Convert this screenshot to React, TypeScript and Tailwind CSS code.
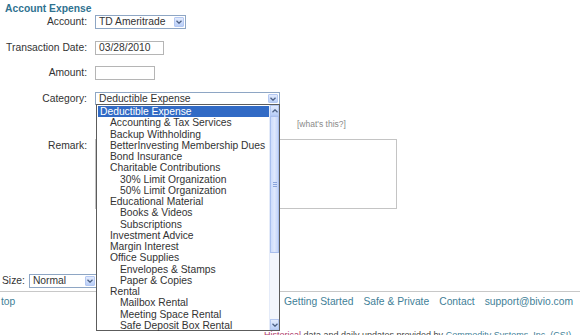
import React from 'react';

const categories: [number, string][] = [
  [0, 'Deductible Expense'],
  [1, 'Accounting & Tax Services'],
  [1, 'Backup Withholding'],
  [1, 'BetterInvesting Membership Dues'],
  [1, 'Bond Insurance'],
  [1, 'Charitable Contributions'],
  [2, '30% Limit Organization'],
  [2, '50% Limit Organization'],
  [1, 'Educational Material'],
  [2, 'Books & Videos'],
  [2, 'Subscriptions'],
  [1, 'Investment Advice'],
  [1, 'Margin Interest'],
  [1, 'Office Supplies'],
  [2, 'Envelopes & Stamps'],
  [2, 'Paper & Copies'],
  [1, 'Rental'],
  [2, 'Mailbox Rental'],
  [2, 'Meeting Space Rental'],
  [2, 'Safe Deposit Box Rental'],
];

const indent = ['pl-[2px]', 'pl-[12px]', 'pl-[22px]'];

function Chevron({ up = false }: { up?: boolean }) {
  return (
    <svg width="6" height="4" viewBox="0 0 6 4" className={up ? 'rotate-180' : ''}>
      <path d="M0.5 0.8 L3 3.2 L5.5 0.8" fill="none" stroke="#4d6185" strokeWidth="1.3" />
    </svg>
  );
}

function ArrowButton() {
  return (
    <div className="w-[10px] h-full flex items-center justify-center border border-[#b4c8f2] bg-gradient-to-b from-[#e3ebfd] to-[#b9cef7] rounded-[1px]">
      <Chevron />
    </div>
  );
}

function Label({ children }: { children: React.ReactNode }) {
  return <div className="w-[87px] text-right shrink-0">{children}</div>;
}

export default function App() {
  return (
    <div className="relative w-[580px] h-[335px] overflow-hidden bg-white text-[#333] text-[10.3px] leading-[12px] font-['Liberation_Sans',Arial,sans-serif]">
      <div className="pl-[5px] pt-[3px] font-bold text-[#2f7290]">Account Expense</div>

      {/* Form rows */}
      <div className="flex items-center gap-[8px] h-[14px]">
        <Label>Account:</Label>
        <div className="w-[91px] h-[14px] border border-[#8ea6c4] flex items-center pl-[3px] pr-[1px] py-[1px] gap-[2px]">
          <span className="flex-1">TD Ameritrade</span>
          <ArrowButton />
        </div>
      </div>

      <div className="flex items-center gap-[8px] h-[14px] mt-[12px]">
        <Label>Transaction Date:</Label>
        <div className="w-[69px] h-[14px] border border-[#b5b5b5] flex items-center pl-[3px]">03/28/2010</div>
      </div>

      <div className="flex items-center gap-[8px] h-[14px] mt-[11px]">
        <Label>Amount:</Label>
        <div className="w-[60px] h-[14px] border border-[#b5b5b5]" />
      </div>

      <div className="flex items-center gap-[8px] h-[13px] mt-[12px]">
        <Label>Category:</Label>
        <div className="w-[185px] h-[13px] border border-[#8ea6c4] flex items-center pl-[3px] pr-[1px] py-[1px]">
          <span className="flex-1">Deductible Expense</span>
          <ArrowButton />
        </div>
      </div>

      <div className="pl-[297px] mt-[13px] text-[8.5px] text-[#8a8a8a] h-[12px]">[what's this?]</div>

      <div className="flex items-start gap-[8px] mt-[9px]">
        <div className="w-[87px] text-right shrink-0 pt-[1px]">Remark:</div>
        <div className="w-[302px] h-[70px] border border-[#c4c4c4]" />
      </div>

      <div className="flex items-center gap-[4px] h-[14px] mt-[65px] pl-[2px]">
        <span>Size:</span>
        <div className="w-[68px] h-[14px] border border-[#8ea6c4] flex items-center pl-[3px] pr-[1px] py-[1px]">
          <span className="flex-1">Normal</span>
          <ArrowButton />
        </div>
      </div>

      <div className="mt-[3px] border-t border-[#c8c8c8]" />
      <div className="flex items-center h-[12px] mt-[4px] text-[#3f7f98]">
        <span className="pl-[1px]">top</span>
        <div className="ml-auto flex gap-[10px] pr-[7px]">
          <span>Getting Started</span>
          <span>Safe &amp; Private</span>
          <span>Contact</span>
          <span>support@bivio.com</span>
        </div>
      </div>

      <div className="pl-[264px] mt-[21px] text-[9px] text-[#444] whitespace-nowrap">
        <span className="text-[#b03a6a]">Historical</span> data and daily updates provided by{' '}
        <span className="text-[#3f7f98]">Commodity Systems, Inc. (CSI)</span>
      </div>

      {/* Open category dropdown */}
      <div className="absolute left-[96px] top-[104px] w-[184px] h-[227px] border border-[#5c5c5c] bg-white flex">
        <div className="flex-1 flex flex-col pl-[1px] pt-[1px]">
          {categories.map(([lvl, name], i) => (
            <div
              key={i}
              className={`h-[11.25px] leading-[11.25px] whitespace-nowrap ${indent[lvl]} ${i === 0 ? 'bg-[#316ac5] text-white' : 'text-[#333]'}`}
            >
              {name}
            </div>
          ))}
        </div>
        <div className="w-[10px] flex flex-col bg-[#f3f6fd] border-l border-[#e4ebf9]">
          <div className="h-[11px] flex items-center justify-center border border-[#b4c8f2] bg-gradient-to-b from-[#e3ebfd] to-[#b9cef7]">
            <Chevron up />
          </div>
          <div className="h-[137px] flex items-center justify-center border border-[#a9bfee] bg-gradient-to-r from-[#cddcfb] via-[#dfe8fd] to-[#c4d5f9]">
            <div className="flex flex-col gap-[1px]">
              <div className="w-[4px] h-[1px] bg-[#8aa4dc]" />
              <div className="w-[4px] h-[1px] bg-[#8aa4dc]" />
              <div className="w-[4px] h-[1px] bg-[#8aa4dc]" />
            </div>
          </div>
          <div className="flex-1" />
          <div className="h-[11px] flex items-center justify-center border border-[#b4c8f2] bg-gradient-to-b from-[#e3ebfd] to-[#b9cef7]">
            <Chevron />
          </div>
        </div>
      </div>
    </div>
  );
}
